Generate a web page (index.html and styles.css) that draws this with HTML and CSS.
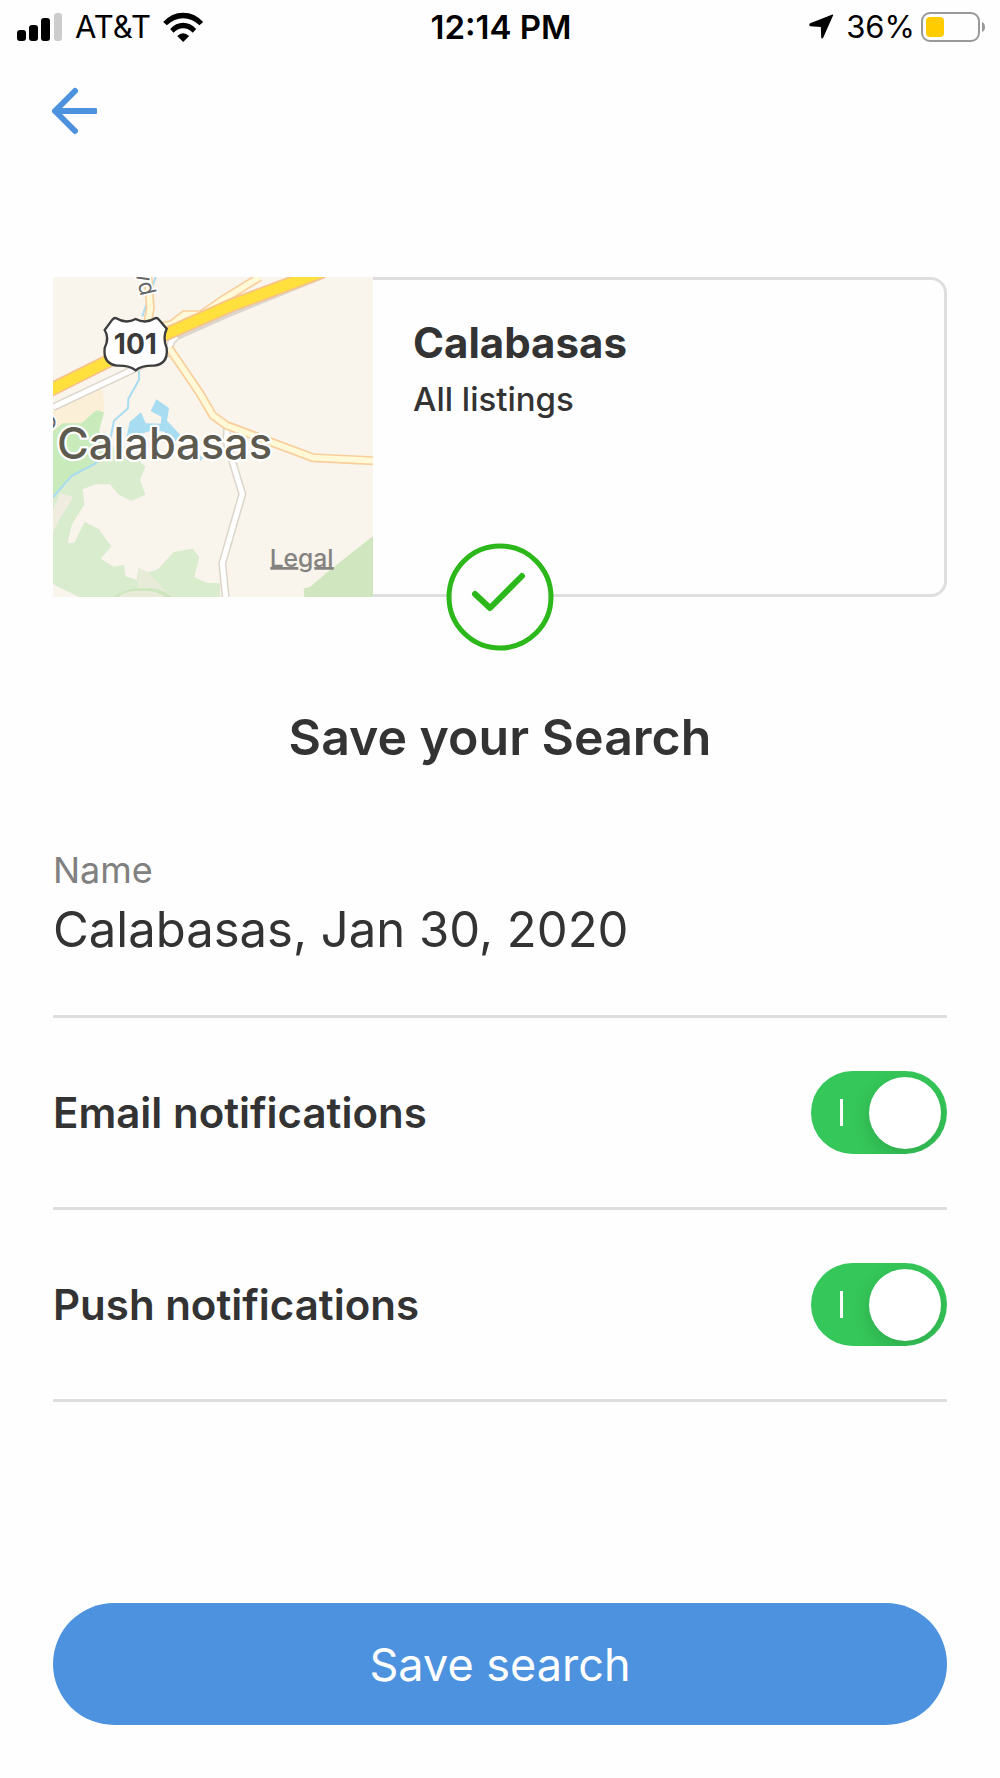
FILE: index.html
```html
<!DOCTYPE html>
<html lang="en">
  <head>
    <meta charset="utf-8" />
    <meta name="viewport" content="width=device-width, initial-scale=1" />
    <title>Save your Search</title>
    <link rel="stylesheet" href="styles.css">
  </head>

  <body>
    <div class="status-bar">
      <div class="status-left">
        <svg width="46" height="28" viewBox="0 0 46 28" aria-hidden="true">
          <rect x="0" y="17" width="9" height="11" rx="3" />
          <rect x="12" y="12" width="9" height="16" rx="3" />
          <rect x="24" y="5" width="9" height="23" rx="3" />
          <rect x="37" y="0" width="8" height="28" rx="3" fill="#ccc" />
        </svg>
        <span>AT&amp;T</span>
        <svg class="wifi" width="41" height="30" viewBox="490 35 122 90" aria-hidden="true">
          <path d="M490 65 Q515 37 550 37 Q585 37 610 65 L599 75 Q576 54 550 54 Q524 54 501 75 Z" />
          <path d="M511 86 Q528 67 550 67 Q572 67 589 86 L579 97 Q565 84 550 84 Q535 84 521 97 Z" />
          <path d="M532 107 Q550 90 568 107 L550 125 Z" />
        </svg>
      </div>
      <div class="status-time">12:14 PM</div>
      <div class="status-right">
        <svg width="25" height="25" viewBox="96 46 74 75" aria-hidden="true">
          <path d="M168 50 Q169 46 164 48 L99 74 Q93 80 100 83 L131 85 L132 116 Q134 123 138 117 Z" />
        </svg>
        <span>36%</span>
        <svg class="battery" width="64" height="32" viewBox="0 0 64 32" aria-hidden="true">
          <rect x="1" y="2" width="57" height="28" rx="8" fill="none" stroke="#999" stroke-width="2" />
          <rect x="5" y="6" width="18" height="20" rx="4" fill="#ffcc00" />
          <path d="M61 11 Q64 12 64 16 Q64 20 61 21 Z" fill="#999" />
        </svg>
      </div>
    </div>

    <form class="container" id="save-form">
      <button type="button" class="back" aria-label="Back">
        <svg width="48" height="48" viewBox="0 0 48 48" aria-hidden="true">
          <path d="M26 4 L6 24 L26 44 M6 24 H46" />
        </svg>
      </button>

      <div class="card">
        <svg class="map" viewBox="40 37 960 960" role="img" aria-label="Map of Calabasas">
          <rect x="40" y="37" width="960" height="960" fill="#f9f4ec" />

          <!-- parks -->
          <path fill="#fbf0d7" d="M40 438 L185 372 Q198 405 192 445 L100 520 L40 520 Z" />
          <path fill="#c9eabb" d="M40 500 L68 476 L125 476 L170 437 L193 443 L178 500 L225 560 L165 600 L95 640 L62 690 L40 700 Z" />
          <path fill="#d9ecce" d="M95 636 L170 595 L220 545 L270 550 L300 590 L317 606 L301 646 L317 690 L275 708 L238 690 L211 659 L168 659 L129 674 L134 720 L96 780 L84 834 L104 834 L135 771 L178 794 L215 845 L183 882 L222 906 L253 900 L257 935 L291 946 L297 910 L322 924 L355 914 L402 862 L458 852 L479 876 L464 937 L500 954 L541 956 L541 997 L120 997 Q70 975 40 958 L40 690 Z" />
          <path fill="#f0ede0" d="M62 686 L101 696 L62 760 L40 800 L40 735 Z" />
          <path fill="#e8ebd8" d="M297 910 L325 922 L375 975 L400 997 L220 997 L255 975 L295 970 Z" />
          <path fill="#cde6be" d="M220 997 Q260 970 290 971 L335 971 Q375 976 398 997 L375 997 Q350 978 320 978 L285 978 Q255 980 235 997 Z" />
          <path fill="#cfe6bf" d="M1000 814 L860 925 L810 968 L792 971 L794 997 L1000 997 Z" />

          <!-- water -->
          <path fill="#a8dcf1" d="M260 520 L270 472 L304 443 L318 476 L363 477 L366 457 L333 439 L350 404 L388 430 L382 468 L425 514 L408 530 L370 500 L330 500 Z" />
          <path fill="#a8dcf1" d="M440 530 L490 580 L482 590 Z" />
          <path class="stream" d="M348 37 L308 155 M298 310 L298 345 L266 403 L265 431 L223 468 L205 560 L165 598 L95 634 L40 698" />

          <!-- small roads -->
          <path class="road-edge" d="M40 428 L290 310 L385 265 L395 230 L410 215 L560 148 L840 34" />
          <path class="road-fill" d="M40 428 L290 310 L385 265 L395 230 L410 215" />
          <path class="road-edge" d="M563 478 L560 530 L578 590 L608 688 L548 896 L558 997" />
          <path class="road-fill" d="M563 490 L560 530 L578 590 L608 688 L548 896 L558 997" />

          <!-- main roads -->
          <g class="main-edge">
            <path d="M325 37 L332 130 L325 170 M365 185 L395 180 L434 150 L485 150 L550 105 L660 37" />
            <path d="M388 250 L480 385 L520 453 L560 482 L820 579 L1000 588" />
          </g>
          <g class="main-fill">
            <path d="M325 37 L332 130 L325 170 M365 185 L395 180 L434 150 L485 150 L550 105 L660 37" />
            <path d="M388 250 L480 385 L520 453 L560 482 L820 579 L1000 588" />
          </g>

          <!-- freeway -->
          <path class="freeway-edge" d="M20 382 L200 292 L380 208 L570 124 L850 20" />
          <path class="freeway-fill" d="M20 382 L200 292 L380 208 L570 124 L850 20" />

          <path class="shield" d="M230 161 Q258 179 288 163 Q318 179 346 161 Q352 158 358 165 L381 192 Q368 220 381 250 Q386 298 344 303 Q305 302 288 317 Q270 302 232 303 Q190 298 195 250 Q210 220 195 196 L218 165 Q224 158 230 161 Z" />
          <text class="shield-text" x="287" y="269" text-anchor="middle">101</text>
          <text class="street-text" transform="translate(286 20) rotate(77)">vd</text>
          <text class="street-text" x="10" y="494">o</text>
          <text class="city-text" x="52" y="584">Calabasas</text>
          <text class="legal-text" x="690" y="907">Legal</text>
          <path class="legal-line" d="M692 911 H776 M824 911 H882" />
        </svg>
        <div class="card-body">
          <h2>Calabasas</h2>
          <p>All listings</p>
        </div>
        <svg class="check" width="108" height="108" viewBox="0 0 108 108" aria-hidden="true">
          <circle cx="54" cy="54" r="51" />
          <path d="M29 51 L44 65 L76 33" />
        </svg>
      </div>

      <h1>Save your Search</h1>

      <div class="field">
        <label for="searchName">Name</label>
        <input type="text" id="searchName" name="searchName" value="Calabasas, Jan 30, 2020" />
      </div>

      <div class="row">
        <label for="emailNotifications">Email notifications</label>
        <input type="checkbox" class="toggle" id="emailNotifications" name="email" checked />
      </div>

      <div class="row">
        <label for="pushNotifications">Push notifications</label>
        <input type="checkbox" class="toggle" id="pushNotifications" name="push" checked />
      </div>

      <button type="submit" class="save">Save search</button>
    </form>

    <script>
      const form = document.querySelector("#save-form");

      form.addEventListener("submit", function (event) {
        event.preventDefault();
      });
    </script>
  </body>
</html>
```
FILE: styles.css
```css
* {
  box-sizing: border-box;
}

body {
  margin: 0;
  min-height: 100vh;
  display: flex;
  flex-direction: column;
  font-family: Inter, "Liberation Sans", sans-serif;
  color: #333;
  background-color: #fefefe;
}

svg {
  display: block;
  flex-shrink: 0;
}

.status-bar {
  display: grid;
  grid-template-columns: 1fr auto 1fr;
  align-items: center;
  height: 53px;
  padding: 0 15px 0 17px;
  font-size: 31px;
  color: #000;
}

.status-left,
.status-right {
  display: flex;
  align-items: center;
  gap: 12px;
}

.status-right {
  justify-content: flex-end;
}

.status-time {
  font-size: 33px;
  font-weight: 600;
}

.battery {
  margin-left: -6px;
}

.container {
  flex: 1;
  display: flex;
  flex-direction: column;
  padding: 34px 53px 53px;
}

.back {
  align-self: flex-start;
  margin: 0 0 142px -4px;
  padding: 0;
  border: none;
  background: none;
  cursor: pointer;
}

.back path {
  fill: none;
  stroke: #4d92df;
  stroke-width: 6;
  stroke-linecap: round;
  stroke-linejoin: round;
}

.card {
  position: relative;
  display: flex;
  border-radius: 16px;
  box-shadow: inset 0 0 0 3px #dedede;
}

.map {
  width: 320px;
  height: 320px;
}

.card-body {
  padding: 40px;
}

.card h2 {
  margin: 0;
  font-size: 42px;
  line-height: 52px;
  font-weight: 700;
}

.card p {
  margin: 12px 0 0;
  font-size: 33px;
  line-height: 36px;
  font-weight: 500;
}

/* sits over the bottom border of the card */
.check {
  position: absolute;
  left: 50%;
  bottom: 0;
  transform: translate(-50%, 50%);
}

.check circle {
  fill: #fefefe;
  stroke: #2cb81a;
  stroke-width: 5;
}

.check path {
  fill: none;
  stroke: #2cb81a;
  stroke-width: 6;
  stroke-linecap: round;
  stroke-linejoin: round;
}

h1 {
  margin: 108px 0 0;
  font-size: 50px;
  line-height: 64px;
  font-weight: 600;
  text-align: center;
}

.field {
  margin-top: 79px;
  padding-bottom: 49px;
  border-bottom: 3px solid #dedede;
}

.field label {
  display: block;
  font-size: 36px;
  line-height: 44px;
  color: #808080;
}

.field input {
  display: block;
  width: 100%;
  height: 74px;
  padding: 0;
  border: none;
  outline: none;
  background: none;
  font-family: inherit;
  font-size: 49px;
  color: #333;
}

.row {
  display: flex;
  justify-content: space-between;
  align-items: center;
  height: 192px;
  border-bottom: 3px solid #dedede;
}

.row label {
  font-size: 42px;
  font-weight: 600;
}

.toggle {
  appearance: none;
  display: flex;
  align-items: center;
  justify-content: space-between;
  width: 136px;
  height: 83px;
  margin: 0;
  padding: 0 6px 0 29px;
  border-radius: 42px;
  overflow: hidden;
  background-color: #ccc;
  cursor: pointer;
}

.toggle:checked {
  background-color: #35c759;
}

.toggle::before {
  content: "";
  width: 3px;
  height: 27px;
  background-color: #fff;
}

.toggle::after {
  content: "";
  width: 72px;
  height: 72px;
  border-radius: 50%;
  background-color: #fff;
  box-shadow: 0 6px 18px rgba(0, 0, 0, 0.15);
}

.save {
  width: 100%;
  height: 122px;
  margin-top: auto;
  border: none;
  border-radius: 61px;
  background-color: #4d92df;
  font-family: inherit;
  font-size: 45px;
  color: #fff;
  cursor: pointer;
}

/* map drawing */
.stream {
  fill: none;
  stroke: #a8dcf1;
  stroke-width: 6;
}

.road-edge {
  fill: none;
  stroke: #dcd5cb;
  stroke-width: 24;
}

.road-fill {
  fill: none;
  stroke: #fff;
  stroke-width: 15;
}

.main-edge {
  fill: none;
  stroke: #f8cf9c;
  stroke-width: 27;
}

.main-fill {
  fill: none;
  stroke: #fff9d8;
  stroke-width: 17;
}

.freeway-edge {
  fill: none;
  stroke: #f7c28c;
  stroke-width: 42;
}

.freeway-fill {
  fill: none;
  stroke: #ffe03d;
  stroke-width: 32;
}

.shield {
  fill: #fff;
  stroke: #3d3d3d;
  stroke-width: 7;
}

.shield-text {
  font-size: 84px;
  font-weight: 700;
  fill: #3a3a3a;
}

.street-text {
  font-size: 68px;
  fill: #666;
  stroke: #fff;
  stroke-width: 10;
  paint-order: stroke;
}

.city-text {
  font-size: 130px;
  font-weight: 500;
  fill: #5d5a50;
  stroke: #fff;
  stroke-width: 14;
  stroke-linejoin: round;
  paint-order: stroke;
}

.legal-text {
  font-size: 74px;
  font-weight: 500;
  fill: #858380;
}

.legal-line {
  stroke: #858380;
  stroke-width: 8;
}
```
